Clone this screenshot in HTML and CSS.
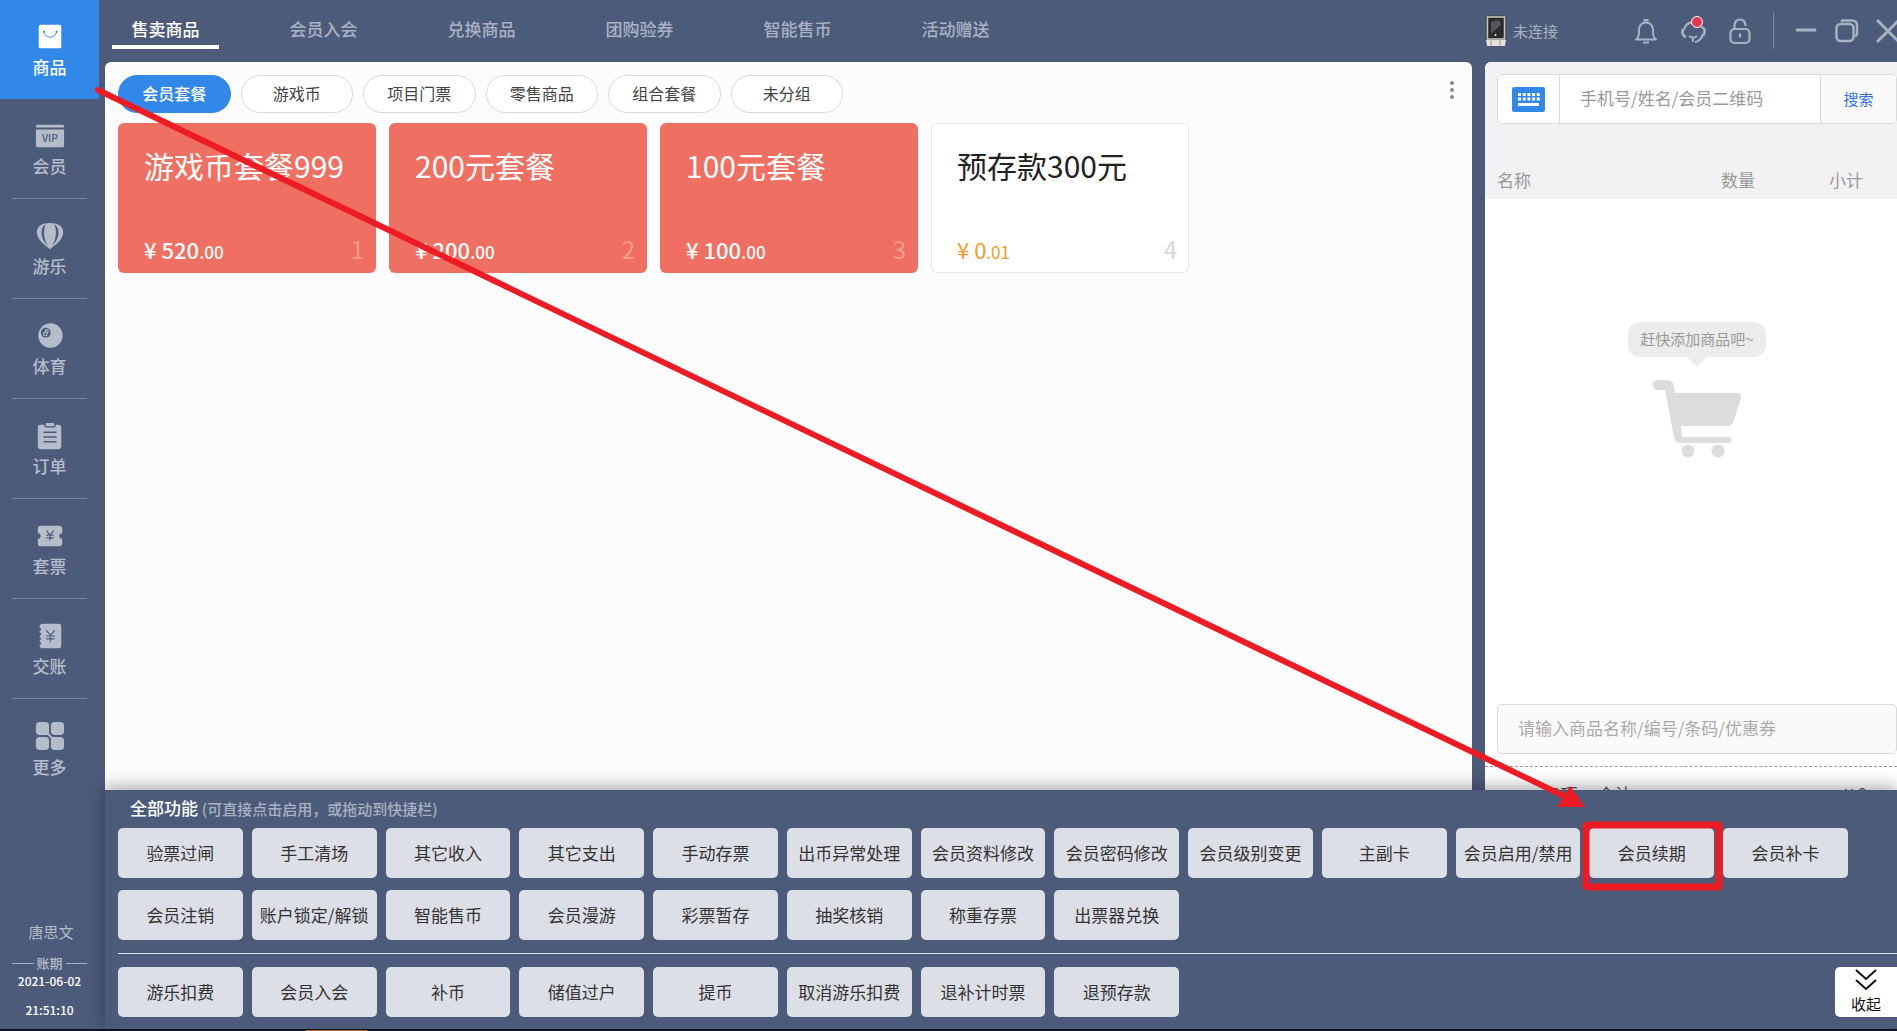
FILE: index.html
```html
<!DOCTYPE html>
<html lang="zh-CN">
<head>
<meta charset="utf-8">
<title>售卖商品</title>
<link rel="stylesheet" href="styles.css">
</head>
<body>
<div class="app">
  <aside class="sidebar">
    <nav class="side-nav">
      <a class="side-item side-active" href="#">
        <svg class="side-icon" viewBox="0 0 32 28"><rect x="4" y="1" width="24" height="25" rx="2" fill="#fff"/><path d="M10 9c1 7 11 7 13 0" fill="none" stroke="#3288e9" stroke-width="1"/><circle cx="9.700" cy="8.500" r="1.200" fill="#3288e9"/><circle cx="23" cy="8.500" r="1.200" fill="#3288e9"/></svg>
        <span>商品</span></a>
      <a class="side-item" href="#">
        <svg class="side-icon" viewBox="0 0 32 28"><path d="M1 5V4q0-2 2-2h26q2 0 2 2v1zM1 7h30v17q0 2-2 2H3q-2 0-2-2z" fill="currentColor"/><text x="16" y="20" class="vip">VIP</text></svg>
        <span>会员</span></a>
      <a class="side-item" href="#">
        <svg class="side-icon" viewBox="0 0 32 28"><path d="M16 0C8 0 2 3 2 10c0 7 6 12 14 18 8-6 14-11 14-18C30 3 24 0 16 0z" fill="currentColor"/><path d="M11.500 1.500C5 5 5 16 13.500 24.500 9 16 8.500 8 11.500 1.500zM20.500 1.500c6.500 3.500 6.500 14.500-2 23 4.500-8.500 5-16.500 2-23z" fill="#4d5b7a"/></svg>
        <span>游乐</span></a>
      <a class="side-item" href="#">
        <svg class="side-icon" viewBox="0 0 32 28"><circle cx="16.500" cy="13.500" r="13" fill="currentColor"/><circle cx="11.500" cy="10.500" r="5.200" fill="#4d5b7a"/><g fill="none" stroke="currentColor" stroke-width="1.200"><circle cx="12.600" cy="8.700" r="1.500"/><circle cx="11" cy="11.800" r="1.900"/></g></svg>
        <span>体育</span></a>
      <a class="side-item" href="#">
        <svg class="side-icon" viewBox="0 0 32 28"><rect x="3" y="2" width="25" height="26" rx="3" fill="currentColor"/><path d="M10 0h12v3q0 2-2 2h-8q-2 0-2-2z" fill="#4d5b7a"/><rect x="11.500" y="0" width="9" height="3.500" rx="1" fill="currentColor"/><path d="M9 10h14M9 15h14M9 20h14" stroke="#4d5b7a" stroke-width="1.600"/></svg>
        <span>订单</span></a>
      <a class="side-item" href="#">
        <svg class="side-icon" viewBox="0 0 32 28"><path d="M6 3h20q3 0 3 3v5a3 3 0 0 0 0 6v5q0 3-3 3H6q-3 0-3-3v-5a3 3 0 0 0 0-6V6q0-3 3-3z" fill="currentColor"/><path d="M12 8l4 5 4-5M12 13h8M12 16h8M16 13v6" fill="none" stroke="#4d5b7a" stroke-width="1.200"/></svg>
        <span>套票</span></a>
      <a class="side-item" href="#">
        <svg class="side-icon" viewBox="0 0 32 28"><rect x="5" y="1" width="23" height="26" rx="3" fill="currentColor"/><g fill="#4d5b7a"><circle cx="5" cy="7" r="1.500"/><circle cx="5" cy="12" r="1.500"/><circle cx="5" cy="17" r="1.500"/><circle cx="5" cy="22" r="1.500"/></g><path d="M12 8l4.500 5 4.500-5M12 14h9M12 17h9M16.500 13v7" fill="none" stroke="#4d5b7a" stroke-width="1.200"/></svg>
        <span>交账</span></a>
      <a class="side-item" href="#">
        <svg class="side-icon side-icon-more" viewBox="0 0 32 32"><g fill="currentColor"><path d="M5 1h6q4 0 4 4v10H5q-4 0-4-4V5q0-4 4-4z"/><rect x="17" y="1" width="14" height="14" rx="4"/><rect x="1" y="17" width="14" height="14" rx="4"/><path d="M17 17h10q4 0 4 4v6q0 4-4 4h-6q-4 0-4-4z"/><path d="M13 13l6 6" stroke="currentColor" stroke-width="2"/></g></svg>
        <span>更多</span></a>
    </nav>
    <div class="shift">
      <span class="user-name">唐思文</span>
      <span class="shift-label">账期</span>
      <time class="shift-date">2021-06-02</time>
      <time class="shift-date">21:51:10</time>
    </div>
  </aside>

  <div class="content">
    <header class="topbar">
      <nav class="tabs">
        <a class="tab tab-active" href="#">售卖商品</a>
        <a class="tab" href="#">会员入会</a>
        <a class="tab" href="#">兑换商品</a>
        <a class="tab" href="#">团购验券</a>
        <a class="tab" href="#">智能售币</a>
        <a class="tab" href="#">活动赠送</a>
      </nav>
      <div class="status">
        <svg class="device" viewBox="0 0 22 32"><rect x="0.500" y="0.500" width="21" height="25" rx="2" fill="#4a4a4b"/><rect x="2.500" y="2" width="17" height="22" fill="#2a2b2d" stroke="#c9c8c0" stroke-width="1.500"/><path d="M6 7l8-2 2 5-6 5-4 4z" fill="#55565a"/><circle cx="10.500" cy="20" r="1" fill="#eee"/><path d="M1 25h20l-1 6H2z" fill="#e4e2da"/><path d="M6 25v6M15 25v6" stroke="#999" stroke-width="1"/></svg>
        <span class="device-label">未连接</span>
      </div>
      <div class="tools">
        <button class="tool" aria-label="通知"><svg viewBox="0 0 28 28"><path d="M4 22.500c3-2.500 3-5 3-10a7 7 0 0 1 14 0c0 5 0 7.500 3 10z" fill="none" stroke="currentColor" stroke-width="2" stroke-linejoin="round"/><path d="M12.500 4.500V3h3v1.500M11 25.500h6" stroke="currentColor" stroke-width="2.200" fill="none"/></svg></button>
        <button class="tool tool-badge" aria-label="客服"><svg viewBox="0 0 28 28"><path d="M5 13a9.500 9.500 0 0 1 18-2M16 25q6-1 8-8" fill="none" stroke="currentColor" stroke-width="2.200"/><path d="M4 12q-2 6 3 8M23 10q5 3 1 9" fill="none" stroke="currentColor" stroke-width="2.600"/><path d="M10 19q4 3 8 0M15 20q-2 2-1 5" fill="none" stroke="currentColor" stroke-width="2"/></svg></button>
        <button class="tool" aria-label="锁定"><svg viewBox="0 0 28 28"><rect x="4.500" y="12" width="19" height="14" rx="4" fill="none" stroke="currentColor" stroke-width="2.200"/><path d="M8.500 12V8a5.500 5.500 0 0 1 11 0v1M14 16.500v4" fill="none" stroke="currentColor" stroke-width="2.200"/></svg></button>
        <i class="tool-line"></i>
        <button class="tool window-tool" aria-label="最小化"><svg viewBox="0 0 28 28"><path d="M5 13h18" stroke="currentColor" stroke-width="3" stroke-linecap="round"/></svg></button>
        <button class="tool window-tool" aria-label="还原"><svg viewBox="0 0 28 28"><rect x="3.500" y="7" width="17" height="17" rx="4" fill="none" stroke="currentColor" stroke-width="2.500"/><path d="M8 4.500q1-1 3-1h8q5 0 5 5v7q0 3-2 4" fill="none" stroke="currentColor" stroke-width="2.500"/></svg></button>
        <button class="tool window-tool" aria-label="关闭"><svg viewBox="0 0 28 28"><path d="M4 4l20 20M24 4L4 24" stroke="currentColor" stroke-width="3" stroke-linecap="round"/></svg></button>
      </div>
    </header>

    <div class="workspace">
      <main class="goods">
        <div class="filter-row">
          <div class="filters">
            <button class="filter filter-active">会员套餐</button>
            <button class="filter">游戏币</button>
            <button class="filter">项目门票</button>
            <button class="filter">零售商品</button>
            <button class="filter">组合套餐</button>
            <button class="filter">未分组</button>
          </div>
          <button class="dots" aria-label="更多选项"><i></i><i></i><i></i></button>
        </div>
        <div class="cards">
          <article class="card"><h2>游戏币套餐999</h2><p><span>¥ 520<small>.00</small></span><em>1</em></p></article>
          <article class="card"><h2>200元套餐</h2><p><span>¥ 200<small>.00</small></span><em>2</em></p></article>
          <article class="card"><h2>100元套餐</h2><p><span>¥ 100<small>.00</small></span><em>3</em></p></article>
          <article class="card card-plain"><h2>预存款300元</h2><p><span>¥ 0<small>.01</small></span><em>4</em></p></article>
        </div>
      </main>

      <section class="cart">
        <div class="cart-top">
          <form class="search">
            <button class="keyboard" type="button" aria-label="键盘"><svg viewBox="0 0 33 25"><rect width="33" height="25" rx="2" fill="#3288e9"/><path d="M6 7.500h22M6 12h22" stroke="#fff" stroke-width="2.800" stroke-dasharray="3 1.700"/><path d="M6 17.500h21" stroke="#fff" stroke-width="3"/></svg></button>
            <input class="search-input" type="text" aria-label="会员" placeholder="手机号/姓名/会员二维码">
            <button class="search-button" type="button">搜索</button>
          </form>
          <div class="cart-head"><span>名称</span><span>数量</span><span>小计</span></div>
        </div>
        <div class="cart-empty">
          <span class="bubble">赶快添加商品吧~</span>
          <svg class="cart-icon" viewBox="0 0 90 80"><g fill="#dcdcdc"><path d="M6 1h9q6 0 7 6l1 7h62q5 0 4 5l-7 22q-2 6-8 6H29l1 11h46q3 0 3 3t-3 3H29q-6 0-7-6L13 11H6q-5 0-5-5t5-5z"/><circle cx="36" cy="72" r="6.500"/><circle cx="66" cy="72" r="6.500"/></g></svg>
        </div>
        <input class="goods-input" type="text" aria-label="商品" placeholder="请输入商品名称/编号/条码/优惠券">
        <div class="total"><span>0项</span><span>合计</span><span class="total-sum">¥ 0</span></div>
      </section>
    </div>

    <section class="drawer">
      <h3 class="drawer-title">全部功能 <small>(可直接点击启用，或拖动到快捷栏)</small></h3>
      <div class="functions">
        <button>验票过闸</button><button>手工清场</button><button>其它收入</button><button>其它支出</button><button>手动存票</button><button>出币异常处理</button><button>会员资料修改</button><button>会员密码修改</button><button>会员级别变更</button><button>主副卡</button><button>会员启用/禁用</button><button>会员续期</button><button>会员补卡</button>
        <button>会员注销</button><button>账户锁定/解锁</button><button>智能售币</button><button>会员漫游</button><button>彩票暂存</button><button>抽奖核销</button><button>称重存票</button><button>出票器兑换</button>
      </div>
      <div class="shortcuts">
        <div class="functions">
          <button>游乐扣费</button><button>会员入会</button><button>补币</button><button>储值过户</button><button>提币</button><button>取消游乐扣费</button><button>退补计时票</button><button>退预存款</button>
        </div>
        <button class="collapse"><svg viewBox="0 0 22 22"><path d="M1 1l10 9L21 1M1 11l10 9 10-9" fill="none" stroke="#111" stroke-width="2"/></svg><span>收起</span></button>
      </div>
    </section>
  </div>
</div>
<div class="taskbar"><i></i></div>
<svg class="annotation" width="1897" height="1031" viewBox="0 0 1897 1031" aria-hidden="true">
  <path d="M98 90L1566 797" stroke="#ed1c24" stroke-width="6" stroke-linecap="round"/>
  <path d="M1570 786L1585 807H1557z" fill="#ed1c24"/>
  <rect x="1586" y="825" width="133" height="62" rx="1" fill="none" stroke="#ed1c24" stroke-width="7"/>
</svg>
</body>
</html>
```
FILE: styles.css
```css
* { box-sizing: border-box; }
body {
  margin: 0;
  height: 100vh;
  display: flex;
  flex-direction: column;
  overflow: hidden;
  background: #4d5b7a;
  color: #333;
  font: 17px/24px "Noto Sans CJK SC", sans-serif;
}
button, input { font: inherit; color: inherit; margin: 0; padding: 0; border: 0; }
button { background: none; cursor: pointer; white-space: nowrap; }
a { color: inherit; text-decoration: none; }
h2, h3, p { margin: 0; font-weight: 400; }
svg { display: block; }

.app { flex: 1; min-height: 0; display: flex; }
.taskbar { height: 2px; padding: 1px 0 0 306px; background: #10151f; }
.taskbar i { display: block; width: 61px; height: 1px; background: #b8742c; }

.sidebar {
  width: 99px;
  flex: none;
  display: flex;
  flex-direction: column;
  justify-content: space-between;
  color: #b5bdcb;
  font-weight: 500;
}
.side-item {
  height: 100px;
  display: flex;
  flex-direction: column;
  align-items: center;
  justify-content: flex-end;
  gap: 4px;
  padding-bottom: 20px;
}
.side-item:not(.side-active):not(:last-child) {
  margin: 0 12px;
  border-bottom: 1px solid #7a879f;
}
.side-active { height: 99px; background: #3288e9; color: #fff; }
.side-icon { width: 30px; height: 28px; }
.side-icon-more { height: 30px; }
.vip { font: 500 11px "Noto Sans CJK SC", sans-serif; text-anchor: middle; fill: #4d5b7a; }
.shift { display: flex; flex-direction: column; padding: 0 12px 9px; text-align: center; }
.user-name { font-size: 15px; font-weight: 400; padding: 0 0 11px 3px; }
.shift-label { display: flex; align-items: center; gap: 3px; font-size: 13px; line-height: 16px; }
.shift-label::before, .shift-label::after { content: ""; flex: 1; height: 1px; background: #a5aebf; }
.shift-date { color: #fff; font-size: 12px; line-height: 20px; }
.shift-date + .shift-date { padding-top: 9px; }

.content { flex: 1; min-width: 0; display: flex; flex-direction: column; }
.topbar { height: 62px; flex: none; display: flex; align-items: flex-start; color: #a9b2c3; }
.tabs { flex: 1; display: flex; gap: 51px; padding-left: 13px; }
.tab { width: 107px; height: 49px; padding-top: 17px; text-align: center; font-weight: 500; }
.tab-active { color: #fff; border-bottom: 4px solid #fff; }
.status { display: flex; align-items: center; gap: 6px; padding-top: 15px; font-size: 15px; }
.device { width: 22px; height: 32px; }
.tools { display: flex; align-items: center; padding: 12px 0 0 74px; margin-right: -5px; }
.tool { width: 28px; height: 36px; position: relative; margin-right: 19px; }
.window-tool { margin-right: 13px; }
.tool:last-child { margin-right: 0; }
.tool-badge::after {
  content: "";
  position: absolute;
  top: 3px;
  right: 4px;
  width: 10px;
  height: 10px;
  border: 1px solid #fff;
  border-radius: 50%;
  background: #e8384f;
}
.tool-line { width: 1px; height: 37px; margin-right: 18px; background: #7a879f; }

.workspace { flex: 1; min-height: 0; display: flex; gap: 13px; padding-left: 6px; overflow: hidden; }
.goods { flex: 1; background: #fcfcfc; border-radius: 6px 6px 0 0; padding: 13px 13px 0; }
.filter-row { display: flex; justify-content: space-between; }
.filters { width: 725px; display: grid; grid-template-columns: repeat(6, 1fr); gap: 10px; }
.filter { height: 38px; padding-bottom: 2px; border: 1px solid #d9d9d9; border-radius: 19px; background: #fff; color: #444; font-size: 16px; }
.filter-active { background: #3288e9; border-color: #3288e9; color: #fff; font-weight: 500; }
.dots { width: 14px; height: 30px; display: flex; flex-direction: column; align-items: center; justify-content: center; gap: 3px; }
.dots i { width: 4px; height: 4px; border-radius: 50%; background: #888; }
.cards { max-width: 1071px; display: grid; grid-template-columns: repeat(4, 1fr); gap: 13px; margin-top: 10px; }
.card {
  height: 150px;
  padding: 24px 12px 7px 26px;
  display: flex;
  flex-direction: column;
  justify-content: space-between;
  border-radius: 6px;
  background: #ef6f62;
  color: #fff;
}
.card h2 { font-size: 30px; line-height: 36px; }
.card p { display: flex; justify-content: space-between; font-size: 22px; line-height: 28px; font-weight: 500; }
.card small { font-size: 17px; }
.card em { font-size: 24px; font-style: normal; font-weight: 400; color: #f59c91; }
.card-plain { background: #fff; border: 1px solid #ebebeb; color: #222; padding: 23px 11px 6px 25px; }
.card-plain p { color: #f39b26; font-weight: 400; }
.card-plain em { color: #d8d8d8; }

.cart { width: 412px; flex: none; display: flex; flex-direction: column; background: #fff; border-radius: 6px 0 0 0; overflow: hidden; }
.cart-top { height: 137px; padding: 12px 0 0 12px; background: #f2f2f4; color: #999; }
.search { height: 50px; display: flex; border: 1px solid #d9d9dc; border-radius: 5px; background: #fff; overflow: hidden; }
.keyboard { width: 61px; display: grid; place-items: center; }
.keyboard svg { width: 33px; height: 25px; }
.search-input { flex: 1; min-width: 0; padding: 0 20px 2px; border: solid #d9d9dc; border-width: 0 1px; background: none; }
input::placeholder { color: #999; opacity: 1; }
.search-button { width: 75px; background: #fafafa; color: #3571e6; font-size: 15px; }
.cart-head { display: grid; grid-template-columns: 1fr 108px 68px; padding-top: 44px; }
.cart-empty { flex: 1; display: flex; flex-direction: column; align-items: center; padding: 123px 0 0 12px; }
.bubble {
  position: relative;
  width: 138px;
  height: 35px;
  border-radius: 12px;
  background: #ececec;
  color: #999;
  font-size: 15px;
  line-height: 34px;
  text-align: center;
  white-space: nowrap;
}
.bubble::after {
  content: "";
  position: absolute;
  top: 35px;
  left: 59px;
  border: solid transparent;
  border-width: 10px 10px 0;
  border-top-color: #ececec;
}
.cart-icon { width: 90px; height: 80px; margin-top: 22px; }
.goods-input { height: 50px; margin-left: 12px; padding: 0 20px 3px; border: 1px solid #d9d9dc; border-radius: 5px; background: #fafafa; }
.goods-input::placeholder { color: #aaa; }
.total { height: 24px; margin-top: 12px; padding: 15px 30px 0 66px; display: flex; gap: 20px; overflow: hidden; border-top: 1px dashed #999; color: #555; }
.total-sum { margin-left: auto; }

.drawer { position: relative; margin-left: 6px; padding: 6px 0 12px 13px; background: #4d5b7a; box-shadow: 0 -3px 16px rgba(0, 0, 0, .35); }
.drawer-title { height: 32px; padding-left: 12px; color: #fff; font-size: 17px; font-weight: 500; }
.drawer-title small { color: #a9b2c3; font-size: 15px; }
.functions { width: 1730px; display: grid; grid-template-columns: repeat(13, 1fr); gap: 12px 9px; }
.functions button { height: 50px; padding-bottom: 1px; border-radius: 5px; background: #dcdfe6; }
.shortcuts { display: flex; justify-content: space-between; margin-top: 13px; padding-top: 13px; border-top: 1px solid #dcdfe6; }
.shortcuts .functions { flex: none; margin-right: -13px; }
.collapse { width: 62px; height: 50px; display: flex; flex-direction: column; align-items: center; justify-content: center; gap: 2px; border-radius: 5px 0 0 5px; background: #fff; color: #111; font-size: 15px; line-height: 22px; }
.collapse svg { width: 22px; height: 22px; }

.annotation { position: absolute; top: 0; left: 0; pointer-events: none; }
```
